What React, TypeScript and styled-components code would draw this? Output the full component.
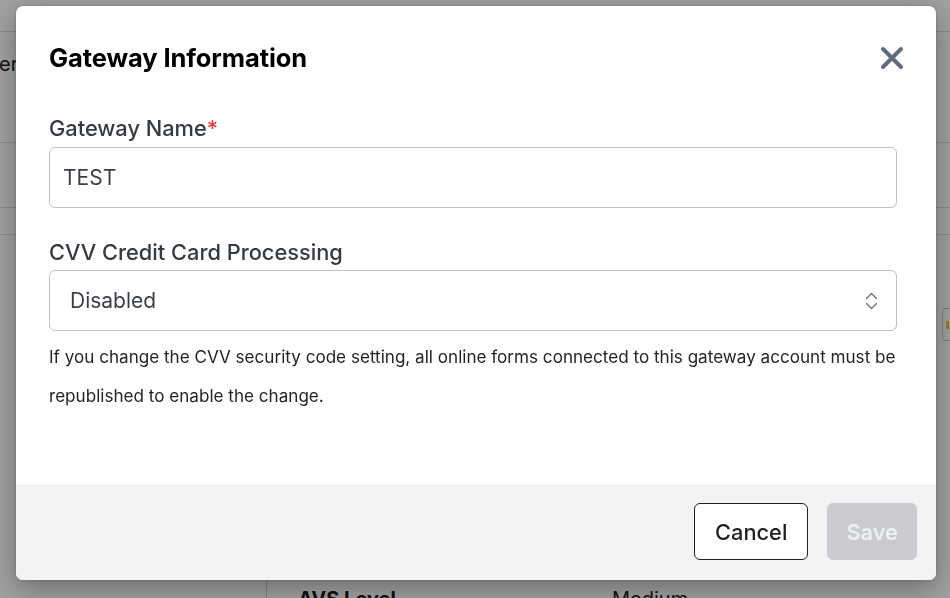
import React from "react";
import styled, { createGlobalStyle } from "styled-components";

const GlobalStyle = createGlobalStyle`
  * { box-sizing: border-box; }
  html, body { margin: 0; padding: 0; }
  body {
    font-family: Inter, "Noto Sans", "Liberation Sans", sans-serif;
    background: #ffffff;
    width: 950px;
    height: 598px;
    overflow: hidden;
  }
`;

/* ---------- underlying page ---------- */
const Page = styled.div`
  width: 950px;
  height: 598px;
  display: flex;
  flex-direction: column;
  background: #ffffff;
  color: #1a1a1a;
`;

const TopBar = styled.div`
  height: 32px;
  border-bottom: 1px solid #dedede;
  flex-shrink: 0;
`;

const PageRow = styled.div<{ $h: number }>`
  height: ${(p) => p.$h}px;
  flex-shrink: 0;
  border-bottom: 1px solid #dedede;
  display: flex;
  align-items: flex-start;
  justify-content: space-between;
  font-size: 20px;
`;

const RowText = styled.span`
  padding-top: 20px;
  margin-left: -1px;
`;

const Middle = styled.div`
  flex: 1;
  display: flex;
  justify-content: flex-end;
  padding-top: 73px;
`;

const SmallBox = styled.div`
  width: 20px;
  height: 33px;
  margin-right: -12px;
  border: 1px solid #c8c8c8;
  border-radius: 4px;
  display: flex;
  align-items: center;
  padding-left: 3px;
  &::before {
    content: "";
    width: 3px;
    height: 8px;
    background: #e5c43a;
  }
`;

const BottomGrid = styled.div`
  height: 30px;
  flex-shrink: 0;
  display: grid;
  grid-template-columns: 267px 1fr;
`;

const SideCol = styled.div`
  border-right: 1px solid #cfcfcf;
`;

const DetailRow = styled.div`
  display: grid;
  grid-template-columns: 314px 1fr;
  padding: 19px 0 0 31px;
  font-size: 20px;
  line-height: 24px;
`;

const DetailKey = styled.span`
  font-weight: 700;
`;

/* ---------- modal ---------- */
const Overlay = styled.div`
  position: fixed;
  inset: 0;
  background: rgba(0, 0, 0, 0.37);
  display: flex;
  justify-content: center;
  align-items: flex-start;
  padding: 6px 14px 0 16px;
`;

const Dialog = styled.div`
  width: 920px;
  height: 574px;
  background: #ffffff;
  border-radius: 7px;
  box-shadow: 0 8px 28px rgba(0, 0, 0, 0.35), 0 0 3px rgba(0, 0, 0, 0.2);
  display: flex;
  flex-direction: column;
  overflow: hidden;
`;

const Body = styled.div`
  flex: 1;
  padding: 37px 39px 0 33px;
  display: flex;
  flex-direction: column;
`;

const Header = styled.div`
  display: flex;
  align-items: center;
  justify-content: space-between;
  margin-bottom: 41px;
`;

const Title = styled.h2`
  margin: 0;
  font-size: 25.5px;
  line-height: 30px;
  font-weight: 700;
  color: #000000;
  letter-spacing: -0.1px;
`;

const CloseButton = styled.button`
  width: 24px;
  height: 24px;
  padding: 0;
  margin-right: -7px;
  border: none;
  background: none;
  display: flex;
  align-items: center;
  justify-content: center;
  cursor: pointer;
`;

const Label = styled.label<{ $gap: number }>`
  display: block;
  font-size: 21.8px;
  line-height: 28px;
  font-weight: 500;
  color: #343a40;
  margin-bottom: ${(p) => p.$gap}px;
`;

const Required = styled.span`
  color: #e53e3e;
`;

const Field = styled.div`
  height: 61px;
  border: 1px solid #bfc1c6;
  border-radius: 6px;
  display: flex;
  align-items: center;
  justify-content: space-between;
  font-size: 21px;
  color: #3a3f45;
  margin-bottom: 30px;
`;

const FieldText = styled.span<{ $pad: number }>`
  padding-left: ${(p) => p.$pad}px;
`;

const SelectField = styled(Field)`
  height: 61px;
  margin-bottom: 7px;
  padding-right: 18px;
`;

const Help = styled.p`
  margin: 0 -8px 0 0;
  font-size: 17.1px;
  line-height: 38.5px;
  color: #212529;
  letter-spacing: 0px;
`;

const Footer = styled.div`
  height: 96px;
  background: #f2f3f5;
  display: flex;
  justify-content: flex-end;
  align-items: flex-start;
  gap: 19px;
  padding: 19px 19px 0 0;
`;

const Button = styled.button<{ $primary?: boolean }>`
  height: 57px;
  padding: 0 ${(p) => (p.$primary ? 18 : 20)}px;
  border-radius: 6px;
  font-family: inherit;
  font-size: 21.8px;
  font-weight: ${(p) => (p.$primary ? 600 : 500)};
  border: 1px solid ${(p) => (p.$primary ? "#c9cbce" : "#1f1f1f")};
  background: ${(p) => (p.$primary ? "#c9cbce" : "#ffffff")};
  color: ${(p) => (p.$primary ? "#eef0f2" : "#1f1f1f")};
  cursor: pointer;
`;

const CloseIcon = () => (
  <svg width="24" height="24" viewBox="0 0 24 24">
    <path
      d="M3 3 L21 21 M21 3 L3 21"
      stroke="#5f6d7b"
      strokeWidth="4"
      strokeLinecap="round"
      fill="none"
    />
  </svg>
);

const Chevrons = () => (
  <svg width="13" height="18" viewBox="0 0 13 18">
    <path
      d="M1.5 6.5 L6.5 1.5 L11.5 6.5 M1.5 11.5 L6.5 16.5 L11.5 11.5"
      stroke="#6b6f75"
      strokeWidth="1.3"
      strokeLinecap="round"
      strokeLinejoin="round"
      fill="none"
    />
  </svg>
);

export default function App() {
  return (
    <>
      <GlobalStyle />
      <Page>
        <TopBar />
        <PageRow $h={111}>
          <RowText>er</RowText>
        </PageRow>
        <PageRow $h={65} />
        <PageRow $h={27} />
        <Middle>
          <SmallBox />
        </Middle>
        <BottomGrid>
          <SideCol />
          <DetailRow>
            <DetailKey>AVS Level</DetailKey>
            <span>Medium</span>
          </DetailRow>
        </BottomGrid>
      </Page>
      <Overlay>
        <Dialog role="dialog">
          <Body>
            <Header>
              <Title>Gateway Information</Title>
              <CloseButton aria-label="Close">
                <CloseIcon />
              </CloseButton>
            </Header>
            <Label $gap={5}>
              Gateway Name<Required>*</Required>
            </Label>
            <Field>
              <FieldText $pad={13}>TEST</FieldText>
            </Field>
            <Label $gap={4}>CVV Credit Card Processing</Label>
            <SelectField>
              <FieldText $pad={20}>Disabled</FieldText>
              <Chevrons />
            </SelectField>
            <Help>
              If you change the CVV security code setting, all online forms
              connected to this gateway account must be republished to enable
              the change.
            </Help>
          </Body>
          <Footer>
            <Button>Cancel</Button>
            <Button $primary disabled>
              Save
            </Button>
          </Footer>
        </Dialog>
      </Overlay>
    </>
  );
}
